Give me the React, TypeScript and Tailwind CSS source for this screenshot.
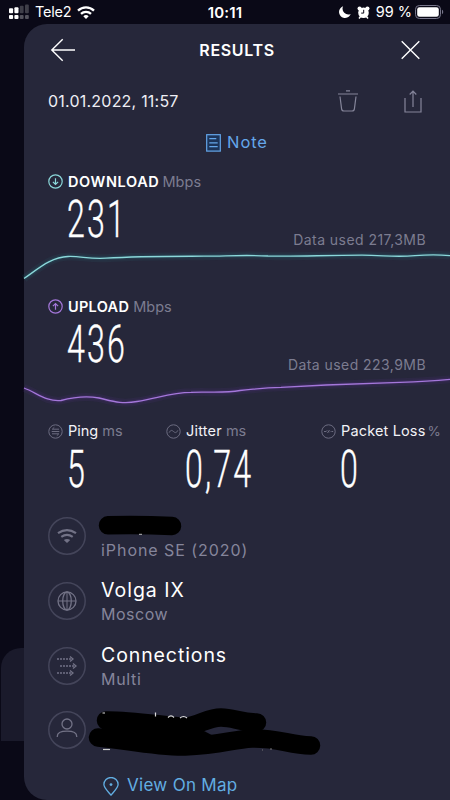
import type { ReactNode } from 'react'

interface SpeedProps {
  label: ReactNode
  value: string
  used: ReactNode
  color: string
  glow: string
  up?: boolean
  path: string
}

const bigNumber =
  'inline-block origin-left whitespace-nowrap font-["Roboto"] font-light text-white text-[51px] leading-[52px] tracking-[3.4px] scale-x-[0.63] [-webkit-text-stroke:0.4px_white]'

function SpeedIcon({ color, up }: { color: string; up?: boolean }) {
  return (
    <svg width="15" height="15" viewBox="0 0 15 15" fill="none" stroke={color} strokeWidth="1.2" className="shrink-0">
      <circle cx="7.5" cy="7.5" r="6.7" />
      {up ? <path d="M7.5 10.8V4.6M4.9 7.1l2.6-2.6 2.6 2.6" /> : <path d="M7.5 4.2v6.2M4.9 7.9l2.6 2.6 2.6-2.6" />}
    </svg>
  )
}

function SpeedSection({ label, value, used, color, glow, up, path }: SpeedProps) {
  return (
    <section className="h-[125px] flex flex-col">
      <div className="h-[25px] pl-6 flex items-center gap-[5px] text-[14.5px] leading-none">
        <SpeedIcon color={color} up={up} />
        {label}
      </div>
      <div className="h-[56px] pl-[43px] pr-6 flex items-end justify-between">
        <span className="h-[56px]"><span className={bigNumber}>{value}</span></span>
        {used}
      </div>
      <svg width="426" height="44" viewBox="0 0 426 44" fill="none" className="block overflow-visible">
        <path d={path} stroke={glow} strokeWidth="8" opacity="0.1" />
        <path d={path} stroke={glow} strokeWidth="4" opacity="0.18" />
        <path d={path} stroke={color} strokeWidth="1.3" />
      </svg>
    </section>
  )
}

function StatIcon({ children }: { children: ReactNode }) {
  return (
    <svg width="15" height="15" viewBox="0 0 15 15" fill="none" stroke="#6c6c80" strokeWidth="1" className="shrink-0">
      <circle cx="7.5" cy="7.5" r="6.7" />
      {children}
    </svg>
  )
}

function InfoRow({ icon, children }: { icon: ReactNode; children: ReactNode }) {
  return (
    <div className="h-[64.7px] flex items-center gap-[15px]">
      <svg width="38" height="38" viewBox="0 0 38 38" fill="none" stroke="#727286" strokeWidth="1.3" className="shrink-0">
        <circle cx="19" cy="19" r="18.2" stroke="#44455a" strokeWidth="1.5" />
        {icon}
      </svg>
      <div className="pt-[2px] flex flex-col">{children}</div>
    </div>
  )
}

function StatusBar() {
  return (
    <header className="h-6 grid grid-cols-3 items-center pl-[9px] text-white text-[15px] leading-none">
      <div className="flex items-center">
        <svg width="20" height="16" viewBox="0 0 20 16" fill="#fff">
          <rect x="0" y="4.2" width="4.1" height="5" rx="1" />
          <rect x="5.4" y="3.2" width="4.1" height="6" rx="1" />
          <rect x="10.8" y="1.8" width="3.8" height="7.4" rx="1" opacity=".22" />
          <rect x="16" y="0.4" width="3.8" height="8.8" rx="1" opacity=".22" />
          <rect x="0" y="10.9" width="4.1" height="4.2" rx="1" />
          <rect x="5.4" y="10.9" width="4.1" height="4.2" rx="1" />
          <rect x="10.8" y="10.9" width="3.8" height="4.2" rx="1" opacity=".3" />
          <rect x="16" y="10.9" width="3.8" height="4.2" rx="1" opacity=".3" />
        </svg>
        <span className="ml-[6px] text-[14.5px] leading-4 tracking-[-0.2px]">Tele2</span>
        <svg width="18" height="13" viewBox="0 0 18 13" fill="none" stroke="#fff" strokeWidth="2.3" className="ml-[5px]">
          <path d="M1 4.6a11.4 11.4 0 0 1 16 0" />
          <path d="M4 7.9a7.1 7.1 0 0 1 10 0" />
          <path d="M9 13 6.3 10.2a3.9 3.9 0 0 1 5.4 0Z" fill="#fff" stroke="none" />
        </svg>
      </div>
      <div className="pr-[9px] text-center text-[15px] font-semibold tracking-[0.2px]">10:11</div>
      <div className="flex items-center justify-end pr-[6px]">
        <svg width="12" height="12" viewBox="0 0 12 12" fill="#fff">
          <path d="M4.1.3A6 6 0 1 0 11.7 8 5.8 5.8 0 0 1 4.1.3Z" />
        </svg>
        <svg width="13" height="13" viewBox="0 0 13 13" className="ml-[6px]">
          <circle cx="2.6" cy="2.6" r="2.1" fill="#fff" />
          <circle cx="10.4" cy="2.6" r="2.1" fill="#fff" />
          <path d="M2 12.5 4 10M11 12.5 9 10" stroke="#fff" strokeWidth="1.5" />
          <circle cx="6.5" cy="6.8" r="5.3" fill="#fff" />
          <path d="M6.7 3.8v3.3H4.2" stroke="#0b0a19" strokeWidth="1" fill="none" />
        </svg>
        <span className="ml-[6px] text-[14.5px] whitespace-nowrap">99 %</span>
        <svg width="29" height="14" viewBox="0 0 29 14" fill="none" className="ml-[3px]">
          <rect x=".5" y=".5" width="25" height="13" rx="3.8" stroke="#77768a" />
          <rect x="2.2" y="2.2" width="21.6" height="9.6" rx="2.3" fill="#fff" />
          <path d="M27 4.8c1.6.6 1.6 3.8 0 4.4Z" fill="#77768a" />
        </svg>
      </div>
    </header>
  )
}

export default function App() {
  return (
    <div className="relative w-[450px] h-[800px] overflow-hidden bg-[#0a0917] font-['Inter','Liberation_Sans',sans-serif]">
      <StatusBar />
      {/* edge of the card that sits under the sheet */}
      <div className="absolute left-px top-[648px] w-12 h-[93px] rounded-tl-[20px] bg-[#1a1a2b]" />

      <main className="relative ml-6 h-[776px] rounded-l-[23px] bg-[#26273a]">
        <div className="h-[52px] px-[26px] flex items-center justify-between text-white">
          <svg width="26" height="24" viewBox="0 0 26 24" fill="none" stroke="#fff" strokeWidth="1.4">
            <path d="M25 12H2M12.7 1.2 1.8 12l10.9 10.8" />
          </svg>
          <h1 className="text-[16px] font-semibold tracking-[0.65px]">RESULTS</h1>
          <svg width="26" height="20" viewBox="0 0 26 20" fill="none" stroke="#fff" strokeWidth="1.4">
            <path d="m3.7 1.2 17.6 17.6M21.3 1.2 3.7 18.8" />
          </svg>
        </div>

        <div className="h-[50px] pl-6 pr-[28px] flex items-center">
          <time className="flex-1 text-[16px] text-[#eeeef4] tracking-[0.22px]">01.01.2022, 11:57</time>
          <svg width="20" height="22" viewBox="0 0 20 22" fill="none" stroke="#85859a" strokeWidth="1.2">
            <path d="M8 .8h4M0 4h20M2 6.5l1.6 12.3q.3 2.2 2.4 2.2h8q2.1 0 2.4-2.2L18 6.5" />
          </svg>
          <svg width="18" height="23" viewBox="0 0 18 23" fill="none" stroke="#85859a" strokeWidth="1.2" className="ml-[46px]">
            <path d="M1 8v14h16V8M9 17V1M5.700 4.500 9 1.100l3.300 3.400" />
          </svg>
        </div>

        <div className="h-[43px] pb-[10px] flex items-center justify-center gap-[6px] text-[#64a6ea]">
          <svg width="15" height="18" viewBox="0 0 15 18" fill="none" stroke="currentColor" strokeWidth="1.2">
            <rect x=".7" y=".7" width="13.6" height="16.4" fill="#1c3459" />
            <path d="M3.3 4.7h7M3.3 8.8h8.4M3.3 12.7h8.4" />
          </svg>
          <span className="text-[16.5px] tracking-[0.9px]">Note</span>
        </div>

        <SpeedSection
          label={
            <>
              <b className="pt-px font-semibold text-white tracking-[0.6px]">DOWNLOAD</b>
              <span className="pt-px -ml-[2px] text-[#7c7c90] tracking-[0.1px]">Mbps</span>
            </>
          }
          value="231"
          used={<span className="text-[#7c7c90] text-[14px] leading-[20px] tracking-[0.44px]">Data used 217,3MB</span>}
          color="#8bd8da"
          glow="#247884"
          path="M0 28.5C14 19 27 7 44 6.5C57 6 64 9.2 82 8.2C115 6 151 6.3 180 6.2C205 6 221 4.7 244 6C270 6.8 300 5.2 338 5.2C360 5.2 369 7.4 391 5.7C404 4.5 416 4.7 426 5.6"
        />
        <SpeedSection
          up
          label={
            <>
              <b className="pt-px font-semibold text-white tracking-[0.3px]">UPLOAD</b>
              <span className="pt-px -ml-px text-[#7c7c90] tracking-[0px]">Mbps</span>
            </>
          }
          value="436"
          used={<span className="text-[#7c7c90] text-[14px] leading-[20px] tracking-[0.44px]">Data used 223,9MB</span>}
          color="#a477da"
          glow="#61349a"
          path="M0 13C13 18 23 27 37 25.5C50 22 61 20.5 75 23C88 26 98 29.5 113 26.5C134 23 148 17.5 167 17.3C185 16.5 200 18.5 216 15.5C231 14.3 238 12.7 257 12.3L302 10L376 7.3Q404 6.5 426 4.3"
        />

        <div className="h-[85px] pl-6 flex text-[14.5px] leading-none text-[#f2f2f6]">
          <div className="w-[118px]">
            <div className="h-[25px] flex items-center gap-[5px]">
              <StatIcon><path d="M11 5.2H4.300l2-1.900M3.700 7.500h7.600M4 9.800h6.800l-2 1.900" /></StatIcon>
              <span>Ping</span>
              <span className="-ml-px text-[#7c7c90]">ms</span>
            </div>
            <div className="pl-[19px]"><span className={bigNumber}>5</span></div>
          </div>
          <div className="w-[155px]">
            <div className="h-[25px] flex items-center gap-[5px]">
              <StatIcon><path d="M3.2 8.6c1.5-2.8 2.6-2.6 4.3-1.1s2.8 1.7 4.3-1.1" /></StatIcon>
              <span className="tracking-[0.2px]">Jitter</span>
              <span className="-ml-px text-[#7c7c90]">ms</span>
            </div>
            <div className="pl-[19px]"><span className={bigNumber}>0,74</span></div>
          </div>
          <div>
            <div className="h-[25px] flex items-center gap-[5px]">
              <StatIcon><path d="M3 7.5h2.2l1-1.2M6.5 9l2-3M8.5 8.3l.7-.8M10.4 7.5h1.8" /></StatIcon>
              <span className="whitespace-nowrap tracking-[0.15px]">Packet Loss</span>
              <span className="-ml-[3px] text-[13.5px] text-[#7c7c90]">%</span>
            </div>
            <div className="pl-[19px]"><span className={bigNumber}>0</span></div>
          </div>
        </div>

        <div className="pl-6 h-[265px]">
          <InfoRow
            icon={
              <g stroke="#727286" strokeWidth="2.2">
                <path d="M10 16.2q9-6.3 18 0M13.3 19.8q5.7-3.9 11.4 0" />
                <path d="M19 26l-3.2-3q3.2-2.2 6.4 0Z" fill="#727286" stroke="none" />
              </g>
            }
          >
            <span className="h-[22px]" />
            <span className="text-[16px] leading-5 pt-1 text-[#85859a] tracking-[0.95px]">iPhone SE (2020)</span>
          </InfoRow>
          <InfoRow
            icon={
              <>
                <circle cx="19" cy="19" r="9" />
                <ellipse cx="19" cy="19" rx="4.3" ry="9" />
                <path d="M19 10v18M10 19h18" strokeWidth="1" />
              </>
            }
          >
            <span className="text-[19.5px] leading-6 text-white tracking-[1px]">Volga IX</span>
            <span className="text-[16px] leading-6 text-[#85859a] tracking-[0.5px]">Moscow</span>
          </InfoRow>
          <InfoRow
            icon={
              <>
                <path d="M9 12h14M12 19h14M9 26h14" strokeDasharray="2 1" />
                <path d="m22 9.5 3 2.5-3 2.5M25 16.5l3 2.5-3 2.5M22 23.5l3 2.5-3 2.5" />
              </>
            }
          >
            <span className="text-[19.5px] leading-6 text-white tracking-[0.9px]">Connections</span>
            <span className="text-[16px] leading-6 text-[#85859a] tracking-[0.7px]">Multi</span>
          </InfoRow>
          <InfoRow
            icon={
              <>
                <circle cx="19" cy="13" r="5" />
                <path d="M9.3 26v-.8c0-5 6-5 9.7-5s9.7 0 9.7 5v.8" />
              </>
            }
          >
            <span />
          </InfoRow>
        </div>

        <a className="h-[34px] pl-[79px] flex items-center gap-[8px] text-[#62aee2]">
          <svg width="16" height="19" viewBox="0 0 16 19" fill="none" stroke="currentColor" strokeWidth="1.3">
            <path d="M8 18.2C3.8 13.2.9 10.6.9 7.6a7.1 7.1 0 0 1 14.2 0c0 3-2.9 5.6-7.1 10.6Z" />
            <circle cx="8" cy="7.6" r="1.4" fill="currentColor" stroke="none" />
          </svg>
          <span className="text-[17px] tracking-[0.3px]">View On Map</span>
        </a>
      </main>

      {/* marker strokes over the private details */}
      <svg width="450" height="260" viewBox="0 500 450 260" className="absolute left-0 top-[500px]" fill="none">
        <path d="M108 525.3Q140 524.5 172 526" stroke="#000" strokeWidth="18.5" strokeLinecap="round" />
        <path d="M139 534.3h3" stroke="#bbb" strokeWidth="1" />
        <path d="M103 749.5h7" stroke="#ccc" strokeWidth="1.2" />
        <path
          d="M106 720.5C128 720 160 725 185 727C200 725 208 717.5 221 717.5C234 717.5 240 722.5 257 722.5"
          stroke="#000"
          strokeWidth="18.5"
          strokeLinecap="round"
        />
        <path
          d="M98 737.5C120 739 155 747 185 746.5C222 745 232 739.5 252 738.5C280 738 288 745 311 745.5"
          stroke="#000"
          strokeWidth="18.5"
          strokeLinecap="round"
        />
        <path d="M106 722 190 725 205 731.5 225 742 205 745 106 740Z" fill="#000" />
        <path d="M102.5 713h2.5M155.500 712.500v4M168 717.500q3-3 6 0M180 718q3.500-3 7 0" stroke="#ddd" strokeWidth="1.2" />
        <path d="M262 750h1M270 749h2" stroke="#777" strokeWidth="1" />
      </svg>
    </div>
  )
}
